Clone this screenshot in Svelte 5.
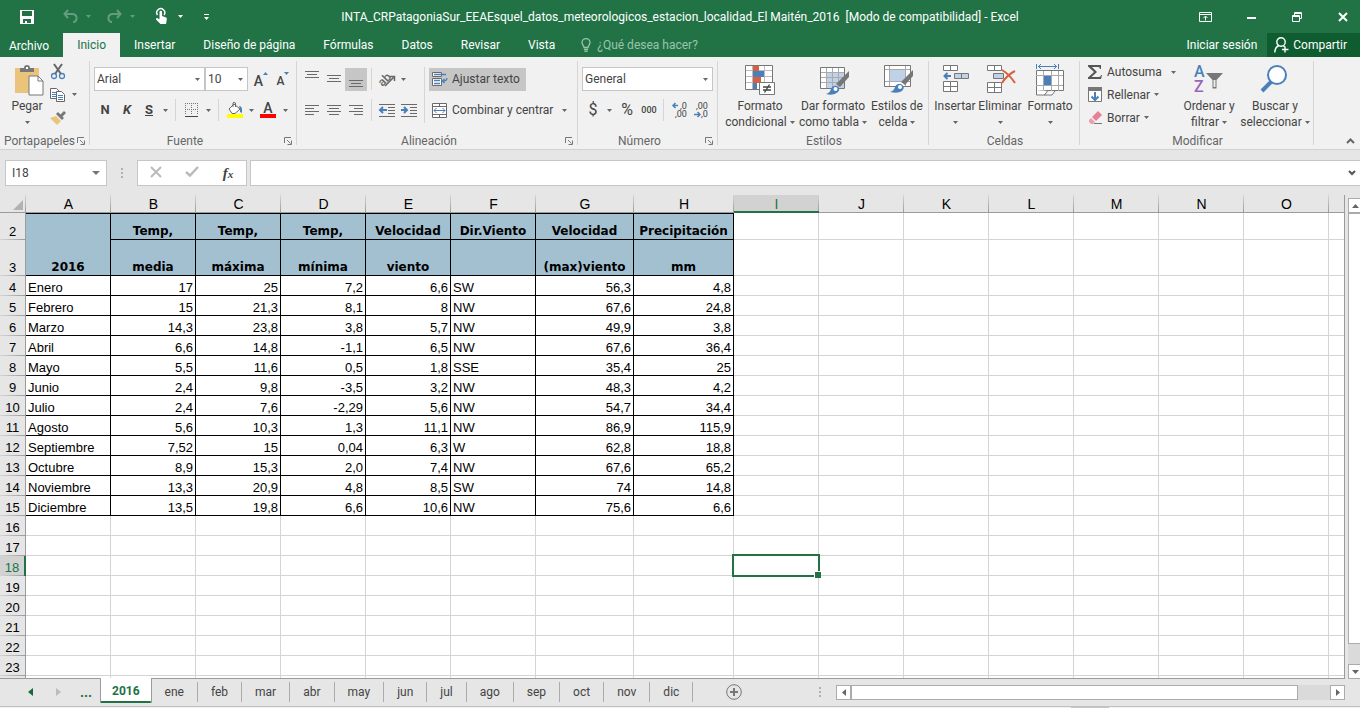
<script lang="ts">
  type Align = 'left' | 'right';

  const menu = ['Insertar', 'Diseño de página', 'Fórmulas', 'Datos', 'Revisar', 'Vista'];
  const columns = ['A', 'B', 'C', 'D', 'E', 'F', 'G', 'H', 'I', 'J', 'K', 'L', 'M', 'N', 'O', ''];
  const sheets = ['ene', 'feb', 'mar', 'abr', 'may', 'jun', 'jul', 'ago', 'sep', 'oct', 'nov', 'dic'];
  const headTop = ['Temp,', 'Temp,', 'Temp,', 'Velocidad', 'Dir.Viento', 'Velocidad', 'Precipitación'];
  const headBottom = ['media', 'máxima', 'mínima', 'viento', '', '(max)viento', 'mm'];
  const months = [
    ['Enero', '17', '25', '7,2', '6,6', 'SW', '56,3', '4,8'],
    ['Febrero', '15', '21,3', '8,1', '8', 'NW', '67,6', '24,8'],
    ['Marzo', '14,3', '23,8', '3,8', '5,7', 'NW', '49,9', '3,8'],
    ['Abril', '6,6', '14,8', '-1,1', '6,5', 'NW', '67,6', '36,4'],
    ['Mayo', '5,5', '11,6', '0,5', '1,8', 'SSE', '35,4', '25'],
    ['Junio', '2,4', '9,8', '-3,5', '3,2', 'NW', '48,3', '4,2'],
    ['Julio', '2,4', '7,6', '-2,29', '5,6', 'NW', '54,7', '34,4'],
    ['Agosto', '5,6', '10,3', '1,3', '11,1', 'NW', '86,9', '115,9'],
    ['Septiembre', '7,52', '15', '0,04', '6,3', 'W', '62,8', '18,8'],
    ['Octubre', '8,9', '15,3', '2,0', '7,4', 'NW', '67,6', '65,2'],
    ['Noviembre', '13,3', '20,9', '4,8', '8,5', 'SW', '74', '14,8'],
    ['Diciembre', '13,5', '19,8', '6,6', '10,6', 'NW', '75,6', '6,6'],
  ];
  const emptyRows = [16, 17, 18, 19, 20, 21, 22, 23, 24];

  let activeCol = $state('I');
  let activeRow = $state(18);
  let formula = $state('');
  let font = $state('Arial');
  let size = $state('10');
  let format = $state('General');

  function alignOf(i: number): Align {
    return i === 0 || i === 5 ? 'left' : 'right';
  }
</script>

{#snippet arrow()}
  <svg class="arrow" width="5" height="3" viewBox="0 0 5 3" aria-hidden="true"><path d="M0 0h5L2.500 3z" fill="currentColor" /></svg>
{/snippet}

{#snippet launcher(name: string)}
  <button class="launcher" aria-label={name}>
    <svg width="8" height="8" viewBox="0 0 8 8" fill="none" stroke="#777"><path d="M.5 6V.5H7M3 3l3.500 3.500M7.500 3.500v4h-4" /></svg>
  </button>
{/snippet}

{#snippet lines(rows: number[][])}
  <svg width="16" height="16" viewBox="0 0 16 16" stroke="#6a6a6a" shape-rendering="crispEdges">
    {#each rows as [x1, x2, y]}
      <path d="M{x1} {y}.5H{x2}" />
    {/each}
  </svg>
{/snippet}

<div class="app">
  <header class="titlebar">
    <div class="quick">
      <button aria-label="Guardar">
        <svg width="14" height="14" viewBox="0 0 14 14"><path d="M0 0h14v14H0zM2 1v5h10V1zM3 9v4h2v-2h2v2h4V9z" fill="#fff" fill-rule="evenodd" /></svg>
      </button>
      <button class="dim undo" aria-label="Deshacer">
        <svg width="15" height="13" viewBox="0 0 15 13" fill="none" stroke="currentColor" stroke-width="2"><path d="M5 0L1.500 4 5 8M2 4h7c6 0 6 8 1 8" /></svg>
      </button>
      <button class="dim drop" aria-label="Opciones de deshacer">{@render arrow()}</button>
      <button class="dim undo" aria-label="Rehacer">
        <svg width="15" height="13" viewBox="0 0 15 13" fill="none" stroke="currentColor" stroke-width="2"><path d="M10 0l3.500 4L10 8M13 4H6C0 4 0 12 5 12" /></svg>
      </button>
      <button class="dim drop" aria-label="Opciones de rehacer">{@render arrow()}</button>
      <button class="touch" aria-label="Modo mouse/táctil">
        <svg width="13" height="17" viewBox="0 0 13 17"><path d="M2.500 7A4 4 0 1 1 9 7" fill="none" stroke="#fff" stroke-width="1.500" /><path d="M4.500 4a1.300 1.300 0 0 1 2.600 0v4l4 1.500q1 .5.700 2L11 16H5.500L1 11.500q-.5-1.500 1-1.500l2.500 1.200z" fill="#fff" /></svg>
      </button>
      <button class="drop" aria-label="Opciones de modo">{@render arrow()}</button>
      <button class="custom" aria-label="Personalizar barra">
        <svg width="5" height="6" viewBox="0 0 5 6" fill="#fff"><path d="M0 0h5v1H0zM0 3h5L2.500 6z" /></svg>
      </button>
    </div>
    <div class="title">INTA_CRPatagoniaSur_EEAEsquel_datos_meteorologicos_estacion_localidad_El Maitén_2016&nbsp; [Modo de compatibilidad] - Excel</div>
    <div class="window">
      <button aria-label="Opciones de la cinta">
        <svg width="13" height="10" viewBox="0 0 13 10" fill="none" stroke="#fff"><path d="M.5.5h12v9H.5zM0 2.500h13M6.500 8.500v-4M4.500 6l2-2 2 2" /></svg>
      </button>
      <button aria-label="Minimizar"><svg width="9" height="10" viewBox="0 0 9 10"><path d="M0 5h9v2H0z" fill="#fff" /></svg></button>
      <button aria-label="Restaurar">
        <svg width="10" height="10" viewBox="0 0 10 10" fill="none" stroke="#fff"><path d="M.5 3.500h7v6h-7zM0 4.500h8M2.500 3V.5h7v6H8M2 1.500h8" /></svg>
      </button>
      <button aria-label="Cerrar"><svg width="10" height="10" viewBox="0 0 10 10" stroke="#fff" stroke-width="2"><path d="M1 1l8 8M9 1L1 9" /></svg></button>
    </div>
  </header>

  <nav class="tabs">
    <button class="tab file">Archivo</button>
    <button class="tab active">Inicio</button>
    {#each menu as item}
      <button class="tab">{item}</button>
    {/each}
    <button class="tell">
      <svg width="10" height="14" viewBox="0 0 10 14" fill="none" stroke="currentColor" stroke-width="1.300"><path d="M3 9.500C3 7.500 1 7 1 4.600a4 4 0 0 1 8 0C9 7 7 7.500 7 9.500zM3 11.500h4M3.500 13.300h3" /></svg>
      ¿Qué desea hacer?
    </button>
    <button class="signin">Iniciar sesión</button>
    <button class="share">
      <svg width="15" height="16" viewBox="0 0 15 16" fill="none" stroke="#fff" stroke-width="1.400"><circle cx="7" cy="5" r="4.200" /><path d="M5 8.500Q1 10 .8 15.500M9 8.500l2 1.500M11 9.500v6M8 12.500h6.500" /></svg>
      Compartir
    </button>
  </nav>

  <div class="ribbon">
    <section class="group">
      <div class="body">
        <button class="big paste">
          <svg width="32" height="32" viewBox="0 0 32 32"><path d="M4 4h24v25H4z" fill="#ebc47c" /><path d="M9 8V4h4q0-3 3-3t3 3h4v4z" fill="#777" /><path d="M15 3h2v2h-2z" fill="#fff" /><path d="M18 12h9l5 5v14H18z" fill="#fff" stroke="#777" /><path d="M27 12v5h5" fill="none" stroke="#777" /></svg>
          <span>Pegar</span>
          <span>{@render arrow()}</span>
        </button>
        <div class="stack clip">
          <button aria-label="Cortar">
            <svg width="16" height="16" viewBox="0 0 16 16" fill="none"><path d="M4 0l7 10M12 0L5 10" stroke="#666" stroke-width="2" /><circle cx="4" cy="12" r="2.500" stroke="#4a80ba" stroke-width="1.300" /><circle cx="12" cy="12" r="2.500" stroke="#4a80ba" stroke-width="1.300" /></svg>
          </button>
          <button aria-label="Copiar">
            <svg width="16" height="16" viewBox="0 0 16 16" fill="#fff" stroke="#666"><path d="M.5 1.500h6l3 3v7h-9z" /><path d="M2 5.500h4M2 7.500h4M2 9.500h4" stroke="#4a80ba" /><path d="M6.500 4.500h5l3 3v7h-8z" /><path d="M8 8.500h5M8 10.500h5M8 12.500h5" stroke="#4a80ba" /></svg>
            {@render arrow()}
          </button>
          <button aria-label="Copiar formato">
            <svg width="16" height="16" viewBox="0 0 16 16"><path d="M0 8l6-2 5 5-4 4z" fill="#ebc47c" /><path d="M6 4l2-2 6 6-2 2zM10 5l4-4 2 2-4 4z" fill="#777" /></svg>
          </button>
        </div>
      </div>
      <div class="caption"><span>Portapapeles</span>{@render launcher('Portapapeles')}</div>
    </section>

    <section class="group">
      <div class="body rows">
        <div class="row">
          <label class="combo face"><select aria-label="Fuente" bind:value={font}><option>Arial</option></select>{@render arrow()}</label>
          <label class="combo size"><select aria-label="Tamaño" bind:value={size}><option>10</option></select>{@render arrow()}</label>
          <button class="ico big-a" aria-label="Aumentar tamaño">A<svg width="5" height="3" viewBox="0 0 5 3"><path d="M0 3h5L2.500 0z" fill="#4a80ba" /></svg></button>
          <button class="ico small-a" aria-label="Reducir tamaño">A<svg width="5" height="3" viewBox="0 0 5 3"><path d="M0 0h5L2.500 3z" fill="#4a80ba" /></svg></button>
        </div>
        <div class="row">
          <button class="ico letter">N</button>
          <button class="ico letter"><i>K</i></button>
          <button class="ico letter"><u>S</u></button>
          <button class="drop" aria-label="Subrayado">{@render arrow()}</button>
          <span class="sep"></span>
          <button class="ico" aria-label="Bordes">
            <svg width="14" height="14" viewBox="0 0 14 14" fill="none" stroke="#777" shape-rendering="crispEdges"><path d="M.5 0v12M6.500 0v12M12.500 0v12M0 .5h13M0 6.500h13" stroke-dasharray="1 1" /><path d="M0 13.500h13" stroke="#444" /></svg>
          </button>
          <button class="drop" aria-label="Tipos de borde">{@render arrow()}</button>
          <span class="sep"></span>
          <button class="ico" aria-label="Color de relleno">
            <svg width="16" height="16" viewBox="0 0 16 16"><path d="M0 12h16v4H0z" fill="#ff0" /><path d="M2 7l5-5 6 5-5 4.500H5z" fill="#fff" stroke="#666" /><path d="M6 5V1q1-1.500 2.500 0v4" fill="none" stroke="#666" /><path d="M12 4q3 0 3 4v3l-2-1V7z" fill="#4a80ba" /></svg>
          </button>
          <button class="drop" aria-label="Colores de relleno">{@render arrow()}</button>
          <button class="ico fontcolor" aria-label="Color de fuente"><b>A</b></button>
          <button class="drop" aria-label="Colores de fuente">{@render arrow()}</button>
        </div>
      </div>
      <div class="caption inset"><span>Fuente</span>{@render launcher('Fuente')}</div>
    </section>

    <section class="group">
      <div class="body">
        <div class="rows">
          <div class="row">
            <button class="ico" aria-label="Alinear arriba">{@render lines([[1, 15, 0], [3, 13, 3], [1, 15, 6]])}</button>
            <button class="ico" aria-label="Alinear en medio">{@render lines([[1, 15, 4], [3, 13, 7], [1, 15, 10]])}</button>
            <button class="ico on" aria-label="Alinear abajo">{@render lines([[1, 15, 9], [3, 13, 12], [1, 15, 15]])}</button>
            <span class="sep near"></span>
            <button class="ico" aria-label="Orientación">
              <svg width="18" height="16" viewBox="0 0 18 16"><text x="0" y="13" font-size="12" font-weight="500" fill="#666" transform="rotate(-45 6 9)">ab</text><path d="M7 15L15.500 6.500M12 5.500h4.500V10" fill="none" stroke="#666" stroke-width="1.500" /></svg>
            </button>
            <button class="drop" aria-label="Ángulos">{@render arrow()}</button>
          </div>
          <div class="row">
            <button class="ico" aria-label="Izquierda">{@render lines([[1, 15, 3], [1, 10, 6], [1, 15, 9], [1, 10, 12]])}</button>
            <button class="ico" aria-label="Centrar">{@render lines([[1, 15, 3], [3, 13, 6], [1, 15, 9], [3, 13, 12]])}</button>
            <button class="ico" aria-label="Derecha">{@render lines([[1, 15, 3], [6, 15, 6], [1, 15, 9], [6, 15, 12]])}</button>
            <span class="sep near"></span>
            <button class="ico" aria-label="Disminuir sangría">
              <svg width="16" height="13" viewBox="0 0 16 13" fill="none" stroke="#6a6a6a"><path d="M0 .5h16M9 3.500h7M9 6.500h7M9 9.500h7M0 12.500h16" /><path d="M8 6H1M4 3L1 6l3 3" stroke="#4a80ba" stroke-width="2" /></svg>
            </button>
            <button class="ico" aria-label="Aumentar sangría">
              <svg width="16" height="13" viewBox="0 0 16 13" fill="none" stroke="#6a6a6a"><path d="M0 .5h16M9 3.500h7M9 6.500h7M9 9.500h7M0 12.500h16" /><path d="M0 6h6M3 3l3 3-3 3" stroke="#4a80ba" stroke-width="2" /></svg>
            </button>
          </div>
        </div>
        <span class="sep tall"></span>
        <div class="rows merge">
          <div class="row">
            <button class="wide on">
              <svg width="16" height="16" viewBox="0 0 16 16" fill="none"><path d="M.5 1.500h9v4h-9zM.5 7.500h9v7h-9z" fill="#fff" stroke="#6a6a6a" /><path d="M2 3.500h12M2 9.500h6M2 12.500h6M15 7q0 3-4 3M12.500 8L10.500 10l2 2" stroke="#4a80ba" stroke-width="1.300" /></svg>
              Ajustar texto
            </button>
          </div>
          <div class="row">
            <button class="wide">
              <svg width="16" height="15" viewBox="0 0 16 15" fill="none" stroke="#6a6a6a"><path d="M.5.500h14v14H.5z" fill="#fff" /><path d="M0 3.500h15M0 11.500h15M7.500 0v4M7.500 11v4" /><path d="M2 7.500h11M4.500 5L2 7.500 4.500 10M10.500 5L13 7.500 10.500 10" stroke="#4a80ba" /></svg>
              Combinar y centrar
            </button>
            <button class="drop" aria-label="Opciones de combinar">{@render arrow()}</button>
          </div>
        </div>
      </div>
      <div class="caption inset"><span>Alineación</span>{@render launcher('Alineación')}</div>
    </section>

    <section class="group">
      <div class="body rows number">
        <div class="row">
          <label class="combo format"><select aria-label="Formato de número" bind:value={format}><option>General</option></select>{@render arrow()}</label>
        </div>
        <div class="row">
          <button class="ico sign">$</button>
          <button class="drop" aria-label="Monedas">{@render arrow()}</button>
          <button class="ico sign percent">%</button>
          <button class="ico zeros">000</button>
          <span class="sep"></span>
          <button class="ico" aria-label="Aumentar decimales">
            <svg width="16" height="16" viewBox="0 0 16 16"><path d="M6 3.500H1M3.500 1L1 3.500 3.500 6" fill="none" stroke="#4a80ba" stroke-width="1.500" /><text x="8" y="7" font-size="9" fill="#444">,0</text><text x="3" y="15" font-size="9" fill="#444">,00</text></svg>
          </button>
          <button class="ico" aria-label="Disminuir decimales">
            <svg width="16" height="16" viewBox="0 0 16 16"><path d="M0 12.500h6M3.500 10L6 12.500 3.500 15" fill="none" stroke="#4a80ba" stroke-width="1.500" /><text x="2" y="7" font-size="9" fill="#444">,00</text><text x="7" y="15" font-size="9" fill="#444">,0</text></svg>
          </button>
        </div>
      </div>
      <div class="caption inset"><span>Número</span>{@render launcher('Número')}</div>
    </section>

    <section class="group">
      <div class="body">
        <button class="big w76">
          <svg width="32" height="32" viewBox="0 0 32 32"><path d="M1.500 1.500h27v24h-27z" fill="#fff" /><path d="M1 6.500h28M1 12.500h28M1 18.500h28M8.500 1v24M20.500 1v24" stroke="#bbb" fill="none" /><path d="M9 2h6v5H9zM9 13h8v6H9z" fill="#d9603f" /><path d="M9 7h11v6H9zM9 19h4v6H9z" fill="#4a80ba" /><path d="M1.500 1.500h27v24h-27z" fill="none" stroke="#777" /><path d="M15.500 18.500h15v12h-15z" fill="#fff" stroke="#777" /><path d="M19 23h8M19 26h8M25.500 20.500l-5 8" stroke="#444" stroke-width="1.300" /></svg>
          <span>Formato</span>
          <span>condicional {@render arrow()}</span>
        </button>
        <button class="big w70">
          <svg width="32" height="32" viewBox="0 0 32 32"><path d="M3.500 3.500h24v21h-24z" fill="#fff" /><path d="M9 9h18v15H9z" fill="#bfd2e8" /><path d="M3 8.500h24M3 13.500h24M3 18.500h24M9.500 3v21M15.500 3v21M21.500 3v21" stroke="#aaa" fill="none" /><path d="M3.500 3.500h24v21h-24z" fill="none" stroke="#777" /><path d="M19 20L32 7v6l-9 10z" fill="#777" /><path d="M9 30q4-1 5-5 2-4 6-3 4 3 1 6-4 4-12 2z" fill="#4a80ba" /><circle cx="18.500" cy="25" r="2" fill="#fff" /></svg>
          <span>Dar formato</span>
          <span>como tabla {@render arrow()}</span>
        </button>
        <button class="big w58">
          <svg width="32" height="32" viewBox="0 0 32 32"><path d="M3.500 1.500h26v21h-26z" fill="#fff" /><path d="M3 5.500h26M3 17.500h26M8.500 1v21M24.500 1v21" stroke="#aaa" /><path d="M9 6h15v11H9z" fill="#bfd2e8" /><path d="M3.500 1.500h26v21h-26z" fill="none" stroke="#777" /><path d="M20 18L32 6v6l-8 9z" fill="#777" /><path d="M9 28q4-1 5-5 2-4 6-3 5 3 1 7-4 3-12 1z" fill="#4a80ba" /><circle cx="19" cy="23" r="2" fill="#fff" /></svg>
          <span>Estilos de</span>
          <span>celda {@render arrow()}</span>
        </button>
      </div>
      <div class="caption"><span>Estilos</span></div>
    </section>

    <section class="group">
      <div class="body">
        <button class="big w44">
          <svg width="32" height="32" viewBox="0 0 32 32" fill="#fff" stroke="#777"><path d="M4.500 1.500h14v5h-14zM11.500 1v6M4.500 17.500h14v10h-14zM11.500 17v11M4 22.500h15" /><path d="M15.500 9.500h14v5h-14zM22.500 9v6" fill="#bfd2e8" /><path d="M12 12H5M8.500 9L5.500 12l3 3" fill="none" stroke="#4a80ba" stroke-width="2" /></svg>
          <span>Insertar</span>
          <span>{@render arrow()}</span>
        </button>
        <button class="big w46">
          <svg width="32" height="32" viewBox="0 0 32 32" fill="#fff" stroke="#777"><path d="M3.500 1.500h14v5h-14zM10.500 1v6M3.500 18.500h14v10h-14zM10.500 18v11M3 23.500h15" /><path d="M9.500 9.500h10v5h-10z" fill="#bfd2e8" /><path d="M18 6q7 4 13 13M31 7q-8 4-13 12" fill="none" stroke="#d9603f" stroke-width="2" /></svg>
          <span>Eliminar</span>
          <span>{@render arrow()}</span>
        </button>
        <button class="big w54">
          <svg width="32" height="32" viewBox="0 0 32 32" fill="none"><path d="M2.500 0v5M24.500 0v5M4 2.500h19M7 0L4.500 2.500 7 5M20 0l2.500 2.500L20 5" stroke="#4a80ba" /><path d="M2.500 6.500h27v20h-27z" fill="#fff" stroke="#777" /><path d="M2 11.500h27M2 21.500h27M9.500 7v20M17.500 7v20M24.500 7v20" stroke="#aaa" /><path d="M10 12h7v9h-7z" fill="#4a80ba" /><path d="M2.500 26v5h8l3-4M10 31h8l3-4" stroke="#777" fill="#fff" /></svg>
          <span>Formato</span>
          <span>{@render arrow()}</span>
        </button>
      </div>
      <div class="caption"><span>Celdas</span></div>
    </section>

    <section class="group">
      <div class="body">
        <div class="stack edit">
          <button>
            <svg width="16" height="16" viewBox="0 0 16 16"><path d="M1 1h13v4h-1q0-2-2-2H5l5 5-5.500 5H12q2 0 2-2h1l-1 4H1v-1.500L7 8 1 2.500z" fill="#555" /></svg>
            Autosuma <span class="push">{@render arrow()}</span>
          </button>
          <button>
            <svg width="16" height="16" viewBox="0 0 16 16"><path d="M1.500.5h13v14h-13z" fill="#fff" stroke="#777" /><path d="M1 0h14v4H1z" fill="#777" /><path d="M8 5v8M4.500 9.500L8 13l3.500-3.500" fill="none" stroke="#4a80ba" stroke-width="2" /></svg>
            Rellenar {@render arrow()}
          </button>
          <button>
            <svg width="16" height="16" viewBox="0 0 16 16"><path d="M5 7l6-6 4 4-6 6z" fill="#e68096" /><path d="M4 8l4 4-2 2H4l-2-2v-2z" fill="#ee9dac" /><path d="M7 13.500h8" stroke="#777" /></svg>
            Borrar {@render arrow()}
          </button>
        </div>
        <button class="big w60">
          <svg width="32" height="32" viewBox="0 0 32 32"><text x="1" y="13" font-size="16" font-weight="500" fill="#4a80ba">A</text><text x="1" y="28" font-size="16" font-weight="500" fill="#9866b8">Z</text><path d="M13 9h17l-6.500 7v8.500h-4V16z" fill="#777" /><path d="M20.500 16h2v7h-2z" fill="#eee" /></svg>
          <span>Ordenar y</span>
          <span>filtrar {@render arrow()}</span>
        </button>
        <button class="big w72">
          <svg width="32" height="32" viewBox="0 0 32 32"><path d="M3 27l9-9" stroke="#4a80ba" stroke-width="4" /><circle cx="18" cy="11" r="9" fill="#fff" stroke="#4a80ba" stroke-width="2" /></svg>
          <span>Buscar y</span>
          <span>seleccionar {@render arrow()}</span>
        </button>
      </div>
      <div class="caption"><span>Modificar</span></div>
    </section>
    <button class="collapse" aria-label="Contraer la cinta"><svg width="9" height="6" viewBox="0 0 9 6"><path d="M1 5l3.500-3.500L8 5" fill="none" stroke="#666" stroke-width="2" /></svg></button>
  </div>

  <div class="formula-bar">
    <label class="namebox">
      <input aria-label="Cuadro de nombres" value="{activeCol}{activeRow}" />
      <svg width="8" height="4" viewBox="0 0 8 4"><path d="M0 0h8L4 4z" fill="#777" /></svg>
    </label>
    <span class="dots"></span>
    <div class="entry">
      <button aria-label="Cancelar"><svg width="12" height="10" viewBox="0 0 12 10" stroke="#bbb" stroke-width="2"><path d="M1 0l10 10M11 0L1 10" /></svg></button>
      <button aria-label="Introducir"><svg width="14" height="11" viewBox="0 0 14 11" fill="none" stroke="#bbb" stroke-width="2.500"><path d="M1 6l4 3.500L13 1" /></svg></button>
      <button class="fx" aria-label="Insertar función">f<small>x</small></button>
    </div>
    <label class="formula">
      <input aria-label="Barra de fórmulas" bind:value={formula} />
      <svg width="8" height="6" viewBox="0 0 8 6"><path d="M1 1l3 3 3-3" fill="none" stroke="#555" stroke-width="2" /></svg>
    </label>
  </div>

  <main class="workspace">
    <div class="sheet">
      <table>
        <colgroup>
          <col class="c-num" />
          {#each columns as c}
            <col class={c === 'G' ? 'c-g' : c === 'H' ? 'c-h' : c ? 'c-std' : ''} />
          {/each}
        </colgroup>
        <thead>
          <tr>
            <th class="corner" aria-label="Seleccionar todo"><svg width="10" height="10" viewBox="0 0 10 10"><path d="M10 0v10H0z" fill="#b2b2b2" /></svg></th>
            {#each columns as c}
              <th class:current={c === activeCol}>{c}</th>
            {/each}
          </tr>
        </thead>
        <tbody>
          <tr class="r2">
            <th>2</th>
            <td class="head" rowspan="2">2016</td>
            {#each headTop as text}<td class="head">{text}</td>{/each}
            {#each columns.slice(8) as c}<td></td>{/each}
          </tr>
          <tr class="r3">
            <th>3</th>
            {#each headBottom as text}<td class="head">{text}</td>{/each}
            {#each columns.slice(8) as c}<td></td>{/each}
          </tr>
          {#each months as month, r}
            <tr>
              <th>{r + 4}</th>
              {#each month as value, i}<td class="data {alignOf(i)}">{value}</td>{/each}
              {#each columns.slice(8) as c}<td></td>{/each}
            </tr>
          {/each}
          {#each emptyRows as row}
            <tr>
              <!-- only the top pixels of the last row are in view -->
              <th class:current={row === activeRow}>{row === 24 ? '' : row}</th>
              {#each columns as c}
                <td class:selected={row === activeRow && c === activeCol}></td>
              {/each}
            </tr>
          {/each}
        </tbody>
      </table>
    </div>
    <div class="vscroll">
      <button aria-label="Subir"><svg width="7" height="4" viewBox="0 0 7 4"><path d="M0 4h7L3.500 0z" fill="#666" /></svg></button>
      <div class="thumb"></div>
      <div class="track"></div>
      <button aria-label="Bajar"><svg width="7" height="4" viewBox="0 0 7 4"><path d="M0 0h7L3.500 4z" fill="#666" /></svg></button>
    </div>
  </main>

  <div class="bottom">
    <div class="sheets">
      <button class="nav" aria-label="Anterior"><svg width="5" height="8" viewBox="0 0 5 8"><path d="M5 0v8L0 4z" fill="#17693c" /></svg></button>
      <button class="nav" aria-label="Siguiente"><svg width="5" height="8" viewBox="0 0 5 8"><path d="M0 0v8l5-4z" fill="#bbb" /></svg></button>
      <button class="nav more">...</button>
      <button class="sheet-tab active">2016</button>
      {#each sheets as name}
        <button class="sheet-tab">{name}</button>
      {/each}
      <button class="add" aria-label="Hoja nueva">
        <svg width="16" height="16" viewBox="0 0 16 16" fill="none" stroke="#777"><circle cx="8" cy="8" r="7.300" /><path d="M8 4v8M4 8h8" stroke-width="2" /></svg>
      </button>
    </div>
    <div class="hscroll">
      <span class="dots"></span>
      <button aria-label="Izquierda"><svg width="4" height="7" viewBox="0 0 4 7"><path d="M4 0v7L0 3.500z" fill="#666" /></svg></button>
      <div class="thumb"></div>
      <div class="track"></div>
      <button aria-label="Derecha"><svg width="4" height="7" viewBox="0 0 4 7"><path d="M0 0v7l4-3.500z" fill="#666" /></svg></button>
    </div>
  </div>
  <footer class="status"><span class="view"></span></footer>
</div>

<style>
  :global(body) {
    margin: 0;
  }

  .app {
    display: flex;
    flex-direction: column;
    height: 100vh;
    overflow: hidden;
    background: #e6e6e6;
    color: #444;
    font: 12px/16px Roboto, 'Open Sans', sans-serif;
  }

  .app * {
    box-sizing: border-box;
  }

  button,
  input,
  select {
    margin: 0;
    padding: 0;
    border: 0;
    background: none;
    color: inherit;
    font: inherit;
    white-space: nowrap;
  }

  svg {
    flex: none;
    overflow: visible;
  }

  /* title bar */
  .titlebar {
    display: grid;
    grid-template-columns: 1fr auto 1fr;
    align-items: center;
    flex: none;
    height: 33px;
    background: #217346;
    color: #fff;
  }

  .quick,
  .window {
    display: flex;
    align-items: center;
    height: 30px;
  }

  .quick {
    padding-left: 16px;
  }

  .quick button,
  .window button {
    display: flex;
    align-items: center;
    justify-content: center;
    width: 22px;
    height: 24px;
  }

  .quick .undo {
    width: 24px;
    margin-left: 20px;
  }

  .quick .drop {
    width: 12px;
  }

  .quick .undo ~ .undo {
    margin-left: 8px;
  }

  .quick .touch {
    width: 26px;
    margin-left: 10px;
  }

  .quick .custom {
    margin-left: 9px;
  }

  .dim {
    opacity: 0.3;
  }

  .window {
    justify-content: flex-end;
  }

  .window button {
    width: 46px;
  }

  .window button:last-child {
    width: 34px;
    margin-left: 6px;
  }

  /* ribbon tabs */
  .tabs {
    display: flex;
    flex: none;
    height: 24px;
    background: #217346;
    color: #fff;
  }

  .tab {
    padding: 0 14px;
  }

  .tab.file {
    padding: 2px 14px 0 9px;
  }

  .tab.active {
    background: #f1f1f1;
    color: #217346;
  }

  .tell,
  .share {
    display: flex;
    align-items: center;
    gap: 6px;
  }

  .tell {
    margin-left: 12px;
    color: #9bc4ac;
  }

  .signin {
    margin-left: auto;
    padding: 0 10px;
  }

  .share {
    gap: 4px;
    padding: 0 13px 0 7px;
    background: #0e5c2f;
  }

  /* ribbon */
  .ribbon {
    display: flex;
    flex: none;
    border-bottom: 1px solid #d2d2d2;
    background: #f1f1f1;
  }

  .group {
    display: flex;
    flex: none;
    flex-direction: column;
    padding: 0 3px 0 4px;
    background: linear-gradient(#d5d5d5, #d5d5d5) right 4px / 1px 84px no-repeat;
  }

  .body {
    display: flex;
    height: 76px;
  }

  .rows {
    display: flex;
    flex-direction: column;
    gap: 7px;
    padding-top: 10px;
  }

  .row {
    display: flex;
    align-items: center;
    height: 24px;
  }

  .caption {
    display: flex;
    align-items: center;
    height: 16px;
    color: #666;
  }

  .caption span {
    flex: 1;
    text-align: center;
  }

  .caption.inset span {
    padding-right: 6px;
  }

  .launcher {
    display: flex;
    align-items: center;
    justify-content: center;
    width: 12px;
  }

  .arrow {
    color: #666;
    vertical-align: middle;
  }

  .titlebar .arrow {
    color: #fff;
  }

  .big {
    display: flex;
    flex-direction: column;
    align-items: center;
    padding-top: 7px;
  }

  .big > svg {
    margin-bottom: 2px;
  }

  .big span {
    height: 16px;
  }

  .paste {
    width: 46px;
  }

  .w44 { width: 44px; }
  .w46 { width: 46px; }
  .w54 { width: 54px; }
  .w58 { width: 58px; }
  .w60 { width: 60px; }
  .w70 { width: 70px; }
  .w72 { width: 72px; }
  .w76 { width: 76px; }

  .stack {
    display: flex;
    flex-direction: column;
    padding-top: 3px;
  }

  .stack button {
    display: flex;
    align-items: center;
    gap: 4px;
    height: 23px;
  }

  .clip button {
    gap: 6px;
  }

  .clip {
    width: 34px;
  }

  .edit {
    width: 95px;
    padding-left: 3px;
  }

  .push {
    margin-left: 5px;
  }

  .ico,
  .drop {
    display: flex;
    align-items: center;
    justify-content: center;
    height: 23px;
  }

  .ico {
    width: 22px;
  }

  .drop {
    width: 10px;
  }

  .on {
    background: #c6c6c6;
  }

  .letter {
    font-weight: 700;
    font-size: 13px;
  }

  .big-a,
  .small-a {
    align-items: flex-start;
    font-size: 14px;
    font-weight: 500;
    line-height: 26px;
  }

  .big-a {
    margin-left: 2px;
  }

  .small-a {
    font-size: 12px;
  }

  .big-a svg,
  .small-a svg {
    margin-top: 4px;
  }

  .fontcolor {
    width: 24px;
  }

  .fontcolor b {
    width: 16px;
    border-bottom: 4px solid #f00;
    font-size: 14px;
    font-weight: 500;
    line-height: 12px;
  }

  .sep {
    width: 1px;
    height: 22px;
    margin: 0 5px;
    background: #d5d5d5;
  }

  .sep.near {
    margin: 0 4px;
  }

  .sep.tall {
    height: 56px;
    margin: 10px 4px 0;
  }

  .merge {
    width: 146px;
  }

  .wide {
    display: flex;
    align-items: center;
    gap: 4px;
    height: 23px;
    padding: 0 6px 0 3px;
  }

  .combo {
    display: flex;
    align-items: center;
    height: 24px;
    padding: 0 4px 0 2px;
    border: 1px solid #c6c6c6;
    background: #fff;
  }

  .combo select {
    flex: 1;
    min-width: 0;
    appearance: none;
    outline: none;
  }

  .face { width: 111px; }
  .size { width: 43px; }
  .format { width: 131px; }
  .number { width: 133px; }

  .sign {
    font-size: 16px;
  }

  .percent {
    width: 26px;
  }

  .zeros {
    width: 18px;
    font-size: 9px;
    font-weight: 500;
  }

  .collapse {
    align-self: flex-end;
    margin-left: auto;
    padding: 0 5px 1px;
  }

  /* formula bar */
  .formula-bar {
    display: flex;
    align-items: center;
    flex: none;
    padding: 10px 0 9px 5px;
  }

  .namebox,
  .entry,
  .formula {
    display: flex;
    align-items: center;
    height: 26px;
    border: 1px solid #c6c6c6;
    background: #fff;
  }

  .namebox {
    width: 102px;
    padding: 0 6px;
  }

  .namebox input,
  .formula input {
    flex: 1;
    min-width: 0;
    outline: none;
  }

  .dots {
    width: 2px;
    height: 10px;
    margin: 0 14px;
    background: repeating-linear-gradient(#b0b0b0 0 2px, transparent 2px 4px);
  }

  .entry {
    width: 110px;
    margin-right: 3px;
  }

  .entry button {
    flex: 1;
  }

  .fx {
    font: italic 700 15px/16px 'Liberation Serif', serif;
  }

  .fx small {
    font-size: 11px;
  }

  .formula {
    flex: 1;
    padding: 0 4px;
    border-right: 0;
  }

  /* grid */
  .workspace {
    display: flex;
    flex: 1;
    min-height: 0;
  }

  .sheet {
    flex: 1;
    min-width: 0;
    overflow: hidden;
    border-right: 1px solid #9b9b9b;
    border-bottom: 1px solid #9b9b9b;
    background: #fff;
  }

  table {
    width: 100%;
    border-spacing: 0;
    table-layout: fixed;
    color: #000;
    font: 13px/14px 'Liberation Sans', Arial, sans-serif;
  }

  .c-num { width: 26px; }
  .c-std { width: 85px; }
  .c-g { width: 98px; }
  .c-h { width: 100px; }

  tr {
    height: 20px;
  }

  thead tr {
    height: 18px;
  }

  .r2 {
    height: 27px;
  }

  .r3 {
    height: 36px;
  }

  td,
  th {
    padding: 0;
    vertical-align: bottom;
    white-space: nowrap;
  }

  th {
    font-weight: 400;
    text-align: center;
  }

  thead th {
    height: 18px;
    padding-bottom: 1px;
    border-bottom: 1px solid #9b9b9b;
    background: linear-gradient(#d5d5d5, #9b9b9b) right / 1px 100% no-repeat #e6e6e6;
    font-size: 14px;
  }

  thead th:last-child {
    background: #e6e6e6;
  }

  thead th.current {
    padding-bottom: 0;
    border-bottom: 2px solid #217346;
    background-color: #d2d2d2;
    color: #217346;
  }

  .corner svg {
    display: block;
    margin: 0 3px 1px auto;
  }

  tbody th {
    padding-bottom: 1px;
    border-right: 1px solid #9b9b9b;
    background: linear-gradient(90deg, #d5d5d5, #9b9b9b) bottom / 100% 1px no-repeat #e6e6e6;
  }

  tbody th.current {
    border-right: 2px solid #217346;
    background-color: #d2d2d2;
    color: #217346;
  }

  td {
    border-right: 1px solid #d4d4d4;
    border-bottom: 1px solid #d4d4d4;
  }

  td:last-child {
    border-right: 0;
  }

  td.data {
    padding: 0 2px;
    border-color: #000;
  }

  td.left {
    text-align: left;
  }

  td.right {
    text-align: right;
  }

  td.head {
    border-color: #000;
    background: #a3c0d1;
    font: 700 12px/16px 'DejaVu Sans', Verdana, sans-serif;
    text-align: center;
  }

  .r2 td.head {
    border-top: 1px solid #000;
  }

  td.selected {
    position: relative;
  }

  td.selected::before {
    content: '';
    position: absolute;
    inset: -2px;
    border: 2px solid #217346;
  }

  td.selected::after {
    content: '';
    position: absolute;
    right: -3px;
    bottom: -3px;
    width: 6px;
    height: 6px;
    border: solid #fff;
    border-width: 1px 0 0 1px;
    background: #217346;
  }

  /* scroll bars */
  .vscroll {
    display: flex;
    flex-direction: column;
    width: 12px;
    margin: 3px 0 0 3px;
  }

  .vscroll button,
  .hscroll button {
    display: flex;
    align-items: center;
    justify-content: center;
    border: 1px solid #ababab;
    background: #fff;
  }

  .vscroll button {
    height: 15px;
    padding-left: 2px;
    border-right: 0;
  }

  .thumb {
    flex: 21;
    border: 1px solid #ababab;
    background: #fff;
  }

  .vscroll .thumb {
    border-right: 0;
  }

  .track {
    flex: 1;
    background: #dadada;
  }

  .bottom {
    display: grid;
    grid-template-columns: 3fr 2fr;
    flex: none;
    height: 27px;
  }

  .sheets {
    display: flex;
    min-width: 0;
    padding-left: 16px;
  }

  .nav {
    width: 28px;
    height: 25px;
  }

  .more {
    color: #217346;
    font-size: 14px;
    font-weight: 700;
  }

  .sheet-tab {
    height: 20px;
    margin-top: 3px;
    padding: 0 13px;
    border-right: 1px solid #ababab;
  }

  .sheet-tab.active {
    height: 25px;
    margin-top: -1px;
    padding: 1px 11px 0;
    border: solid #9b9b9b;
    border-width: 0 1px;
    background: linear-gradient(#217346, #217346) bottom / 100% 2px no-repeat #fff;
    color: #217346;
    font-weight: 700;
  }

  .add {
    height: 25px;
    margin-left: 33px;
  }

  .add svg {
    display: block;
  }

  .hscroll {
    display: flex;
    min-width: 0;
    height: 15px;
    margin: 6px 15px 0 0;
  }

  .hscroll .dots {
    margin: 2px 15px 0 3px;
  }

  .hscroll button {
    width: 15px;
  }

  .hscroll .thumb {
    flex: 14;
  }

  .status {
    display: flex;
    justify-content: flex-end;
    flex: none;
    height: 2px;
    border-top: 1px solid #c0c0c0;
    background: #f1f1f1;
  }

  .view {
    width: 38px;
    margin-right: 251px;
    background: #c6c6c6;
  }
</style>
